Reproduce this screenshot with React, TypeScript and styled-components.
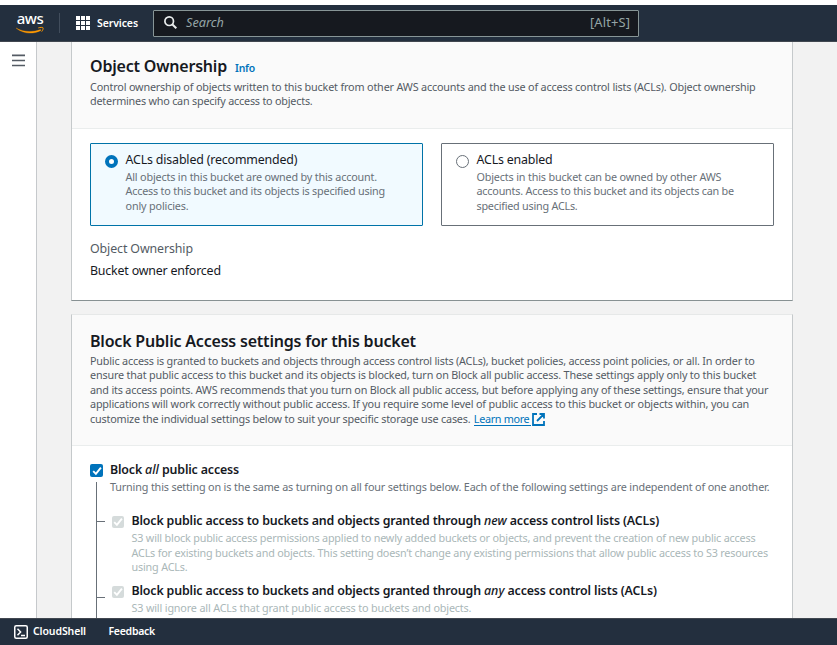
import React from "react";
import styled, { createGlobalStyle } from "styled-components";

const GlobalStyle = createGlobalStyle`
  *, *::before, *::after { box-sizing: border-box; }
  html, body { margin: 0; padding: 0; overflow: hidden; }
  body { font-family: "Noto Sans", "Open Sans", sans-serif; font-size: 12.4px; color: #16191f; background: #fff; }
  p, h2 { margin: 0; }
`;

const Page = styled.div`
  display: flex;
  flex-direction: column;
  width: 837px;
  height: 645px;
  padding-top: 5px;
  overflow: hidden;
`;

const TopNav = styled.header`
  display: flex;
  align-items: center;
  flex: none;
  height: 37px;
  background: #232f3e;
  border-bottom: 1px solid #414750;
  color: #fff;
`;

const Logo = styled.div`
  display: flex;
  flex-direction: column;
  align-items: center;
  width: 30px;
  margin-left: 15px;
  height: 26px;
`;

const LogoWord = styled.span`
  font-size: 15px;
  line-height: 17px;
  height: 16px;
  font-weight: 500;
  letter-spacing: -0.5px;
`;

const Divider = styled.span`
  width: 1px;
  height: 20px;
  margin-left: 14px;
  background: #414d5c;
`;

const Services = styled.div`
  display: flex;
  align-items: center;
  gap: 7px;
  width: 93px;
  padding-left: 16px;
  font-size: 10.5px;
  font-weight: 600;
  letter-spacing: -0.1px;
`;

const NavText = styled.span`
  padding-bottom: 1px;
`;

const SearchBox = styled.div`
  display: flex;
  align-items: center;
  width: 486px;
  height: 27px;
  padding: 0 8px 2px 10px;
  border: 1px solid #879596;
  border-radius: 1px;
  background: #16191f;
  color: #95a5a6;
  font-size: 12.7px;
`;

const Placeholder = styled.em`
  flex: 1;
  margin-left: 9px;
`;

const Shortcut = styled.span`
  font-size: 12.9px;
  letter-spacing: 0.12px;
`;

const Body = styled.div`
  display: flex;
  flex: 1;
  min-height: 0;
  background: #f2f2f2;
`;

const SideRail = styled.aside`
  display: flex;
  justify-content: center;
  width: 37px;
  padding-top: 12px;
  background: #fff;
  border-right: 1px solid #c6c9cc;
`;

const Main = styled.main`
  display: flex;
  flex-direction: column;
  gap: 13px;
  width: 722px;
  margin-left: 34px;
  overflow: hidden;
`;

const Panel = styled.section<{ $height: number; $topBorder?: boolean }>`
  flex: none;
  height: ${(p) => p.$height}px;
  background: #fff;
  border: 1px solid #c5c9cb;
  border-top: ${(p) => (p.$topBorder ? "1px solid #e6e8e8" : "none")};
  border-bottom-color: #879193;
`;

const PanelHeader = styled.div<{ $height: number; $top: number }>`
  height: ${(p) => p.$height}px;
  padding: ${(p) => p.$top}px 18px 0;
  background: #fafafa;
  border-bottom: 1px solid #eaeded;
`;

const Title = styled.h2<{ $gap: number }>`
  display: flex;
  align-items: baseline;
  gap: 8px;
  height: 22px;
  margin-bottom: ${(p) => p.$gap}px;
  font-size: 16px;
  font-weight: 600;
  line-height: 22px;
  letter-spacing: -0.2px;
`;

const InfoLink = styled.a`
  color: #0073bb;
  font-size: 10.4px;
  letter-spacing: -0.19px;
`;

const Copy = styled.p<{ $tone?: "muted" | "hint" | "disabled" }>`
  font-size: 10.8px;
  line-height: 14.4px;
  color: ${(p) => (p.$tone === "disabled" ? "#aab7b8" : p.$tone === "hint" ? "#687078" : "#545b64")};
`;

const Line = styled.span<{ $track?: number }>`
  display: block;
  white-space: nowrap;
  letter-spacing: ${(p) => p.$track ?? -0.18}px;
`;

const Tracked = styled.span<{ $track: number }>`
  letter-spacing: ${(p) => p.$track}px;
`;

const LearnMore = styled.a`
  display: inline-block;
  height: 14px;
  margin-left: 3.4px;
  padding-right: 2px;
  line-height: 14.4px;
  letter-spacing: -0.32px;
  color: #0073bb;
  border-bottom: 1px solid #0073bb;
  vertical-align: top;
`;

const ExternalIcon = styled.svg`
  margin-left: 1px;
  vertical-align: -3px;
`;

const Tiles = styled.div`
  display: grid;
  grid-template-columns: 333px 333px;
  gap: 18px;
  padding: 14px 18px 0;
`;

const Tile = styled.div<{ $selected?: boolean }>`
  display: flex;
  gap: 6.5px;
  height: 83px;
  padding: 6px 13px;
  border: 1px solid ${(p) => (p.$selected ? "#0073a8" : "#687078")};
  border-radius: 1px;
  background: ${(p) => (p.$selected ? "#f1faff" : "#fff")};
`;

const Radio = styled.span<{ $selected?: boolean }>`
  flex: none;
  width: 13px;
  height: 13px;
  margin: 5px 1px 0 1px;
  border: ${(p) => (p.$selected ? "4px solid #0073bb" : "1px solid #687078")};
  border-radius: 50%;
  background: #fff;
`;

const Label = styled.div<{ $track: number; $bold?: boolean; $height?: number }>`
  height: ${(p) => p.$height ?? 20}px;
  font-size: 12.4px;
  line-height: 19px;
  white-space: nowrap;
  letter-spacing: ${(p) => p.$track}px;
  font-weight: ${(p) => (p.$bold ? 600 : 400)};

  em {
    font-weight: 500;
    letter-spacing: 0;
  }
`;

const KeyValue = styled.dl`
  margin: 13px 18px 0;
  line-height: 20px;
`;

const Key = styled.dt`
  color: #545b64;
  letter-spacing: -0.11px;
`;

const Value = styled.dd`
  margin: 2px 0 0;
  letter-spacing: -0.187px;
`;

const Settings = styled.div`
  padding: 14px 18px 0;
`;

const Setting = styled.div<{ $gap: number }>`
  display: flex;
  gap: ${(p) => p.$gap}px;
`;

const Check = styled.span<{ $disabled?: boolean }>`
  display: flex;
  align-items: center;
  justify-content: center;
  flex: none;
  width: ${(p) => (p.$disabled ? 12 : 13)}px;
  height: ${(p) => (p.$disabled ? 12 : 13)}px;
  margin-top: ${(p) => (p.$disabled ? 5 : 4)}px;
  border-radius: 2px;
  background: ${(p) => (p.$disabled ? "#d5dbdb" : "#0073bb")};
`;

const Tree = styled.div`
  display: flex;
  flex-direction: column;
  margin-left: 6px;
  margin-top: -12px;
  padding-top: 29px;
  border-left: 1px solid #687078;
`;

const Branch = styled.div<{ $height: number; $tick: number }>`
  display: flex;
  height: ${(p) => p.$height}px;

  &::before {
    content: "";
    flex: none;
    width: 8px;
    height: 1px;
    margin: ${(p) => p.$tick}px 7px 0 0;
    background: #687078;
  }
`;

const Footer = styled.footer`
  display: flex;
  align-items: center;
  flex: none;
  height: 27px;
  padding-left: 14px;
  background: #232f3e;
  border-top: 1px solid #414750;
  color: #fff;
  font-size: 10.5px;
  font-weight: 600;
`;

const FooterItem = styled.span<{ $track: number }>`
  padding-bottom: 2px;
  letter-spacing: ${(p) => p.$track}px;
`;

const FeedbackItem = styled(FooterItem)`
  margin-left: 22.5px;
`;

const TerminalIcon = styled.svg`
  margin-right: 5px;
`;

const CheckMark = () => (
  <svg width="12" height="12" viewBox="0 0 12 12" fill="none" stroke="#fff" strokeWidth="1.9">
    <path d="M2.2 6.1 4.9 8.8 9.9 2.700" />
  </svg>
);

export default function App() {
  return (
    <Page>
      <GlobalStyle />
      <TopNav>
        <Logo>
          <LogoWord>aws</LogoWord>
          <svg width="30" height="9" viewBox="0 0 30 9" fill="none">
            <path d="M1 2C8.500 6.200 18 6.500 25.500 3.500l.5.9C18 8.600 8 8 1 2z" fill="#f90" stroke="#f90" strokeWidth=".3" />
            <path d="M23.300 1.900c1.900-.6 4.300-.7 4.700-.2.400.6-.1 2.500-1.300 3.900" stroke="#f90" strokeWidth="1" />
          </svg>
        </Logo>
        <Divider />
        <Services>
          <svg width="14" height="14" viewBox="0 0 14 14" fill="#fff">
            {[0, 5, 10].map((y) => [0, 5, 10].map((x) => <rect key={`${x}-${y}`} x={x} y={y} width="4" height="4" />))}
          </svg>
          <NavText>Services</NavText>
        </Services>
        <SearchBox>
          <svg width="13" height="13" viewBox="0 0 13 13" fill="none" stroke="#eaeded" strokeWidth="1.7">
            <circle cx="5.200" cy="5.200" r="4.300" />
            <path d="M8.200 8.200 12.300 12.300" strokeWidth="2" />
          </svg>
          <Placeholder>Search</Placeholder>
          <Shortcut>[Alt+S]</Shortcut>
        </SearchBox>
      </TopNav>

      <Body>
        <SideRail>
          <svg width="13" height="13" viewBox="0 0 13 13" stroke="#545b64" strokeWidth="1.700">
            <path d="M0 1.400h13M0 6.500h13M0 11.500h13" />
          </svg>
        </SideRail>
        <Main>
          <Panel $height={259}>
            <PanelHeader $height={87} $top={13}>
              <Title $gap={3}>
                Object Ownership <InfoLink>Info</InfoLink>
              </Title>
              <Copy>
                <Line $track={-0.169}>
                  Control ownership of objects written to this bucket from other AWS accounts and the use of access control lists (ACLs). Object ownership
                </Line>
                <Line $track={-0.21}>determines who can specify access to objects.</Line>
              </Copy>
            </PanelHeader>
            <Tiles>
              <Tile $selected>
                <Radio $selected />
                <div>
                  <Label $track={-0.163}>ACLs disabled (recommended)</Label>
                  <Copy $tone="hint">
                    <Line $track={-0.168}>All objects in this bucket are owned by this account.</Line>
                    <Line $track={-0.201}>Access to this bucket and its objects is specified using</Line>
                    <Line $track={-0.155}>only policies.</Line>
                  </Copy>
                </div>
              </Tile>
              <Tile>
                <Radio />
                <div>
                  <Label $track={-0.184}>ACLs enabled</Label>
                  <Copy $tone="hint">
                    <Line $track={-0.161}>Objects in this bucket can be owned by other AWS</Line>
                    <Line $track={-0.207}>accounts. Access to this bucket and its objects can be</Line>
                    <Line $track={-0.233}>specified using ACLs.</Line>
                  </Copy>
                </div>
              </Tile>
            </Tiles>
            <KeyValue>
              <Key>Object Ownership</Key>
              <Value>Bucket owner enforced</Value>
            </KeyValue>
          </Panel>

          <Panel $height={400} $topBorder>
            <PanelHeader $height={131} $top={15}>
              <Title $gap={2}>Block Public Access settings for this bucket</Title>
              <Copy>
                <Line $track={-0.191}>
                  Public access is granted to buckets and objects through access control lists (ACLs), bucket policies, access point policies, or all. In order to
                </Line>
                <Line $track={-0.171}>
                  ensure that public access to this bucket and its objects is blocked, turn on Block all public access. These settings apply only to this bucket
                </Line>
                <Line $track={-0.188}>
                  and its access points. AWS recommends that you turn on Block all public access, but before applying any of these settings, ensure that your
                </Line>
                <Line $track={-0.172}>
                  applications will work correctly without public access. If you require some level of public access to this bucket or objects within, you can
                </Line>
                <Line $track={-0.192}>
                  customize the individual settings below to suit your specific storage use cases.
                  <LearnMore>Learn more</LearnMore>
                  <ExternalIcon width="13" height="13" viewBox="0 0 13 13" fill="none" stroke="#0073bb" strokeWidth="1.800">
                    <path d="M5 1H1v11h11V8M7.500 1H12v4.500M12 1 5 8" />
                  </ExternalIcon>
                </Line>
              </Copy>
            </PanelHeader>
            <Settings>
              <Setting $gap={7}>
                <Check>
                  <CheckMark />
                </Check>
                <div>
                  <Label $bold $track={-0.16}>
                    Block <em>all</em> public access
                  </Label>
                  <Copy $tone="hint">
                    <Line $track={-0.161}>
                      Turning this setting on is the same as turning on all four settings below. Each of the following settings are independent of one another.
                    </Line>
                  </Copy>
                </div>
              </Setting>
              <Tree>
                <Branch $height={70} $tick={10}>
                  <Setting $gap={7.5}>
                    <Check $disabled>
                      <CheckMark />
                    </Check>
                    <div>
                      <Label $bold $track={-0.155}>
                        Block public access to buckets and objects granted through <em>new</em>{" "}
                        <Tracked $track={-0.137}>access control lists (ACLs)</Tracked>
                      </Label>
                      <Copy $tone="disabled">
                        <Line $track={-0.183}>
                          S3 will block public access permissions applied to newly added buckets or objects, and prevent the creation of new public access
                        </Line>
                        <Line $track={-0.19}>
                          ACLs for existing buckets and objects. This setting doesn’t change any existing permissions that allow public access to S3 resources
                        </Line>
                        <Line>using ACLs.</Line>
                      </Copy>
                    </div>
                  </Setting>
                </Branch>
                <Branch $height={90} $tick={16}>
                  <Setting $gap={7.5}>
                    <Check $disabled>
                      <CheckMark />
                    </Check>
                    <div>
                      <Label $bold $track={-0.155}>
                        Block public access to buckets and objects granted through <em>any</em>{" "}
                        <Tracked $track={-0.137}>access control lists (ACLs)</Tracked>
                      </Label>
                      <Copy $tone="disabled">
                        <Line $track={-0.163}>S3 will ignore all ACLs that grant public access to buckets and objects.</Line>
                      </Copy>
                    </div>
                  </Setting>
                </Branch>
              </Tree>
            </Settings>
          </Panel>
        </Main>
      </Body>

      <Footer>
        <TerminalIcon width="14" height="14" viewBox="0 0 14 14" fill="none" stroke="#fff" strokeWidth="1.500">
          <rect x=".75" y=".75" width="12.500" height="12.500" rx="1.500" />
          <path d="M3.500 3.800 6.600 7 3.500 10.200M7 10.400h4" />
        </TerminalIcon>
        <FooterItem $track={-0.1}>CloudShell</FooterItem>
        <FeedbackItem $track={-0.27}>Feedback</FeedbackItem>
      </Footer>
    </Page>
  );
}
